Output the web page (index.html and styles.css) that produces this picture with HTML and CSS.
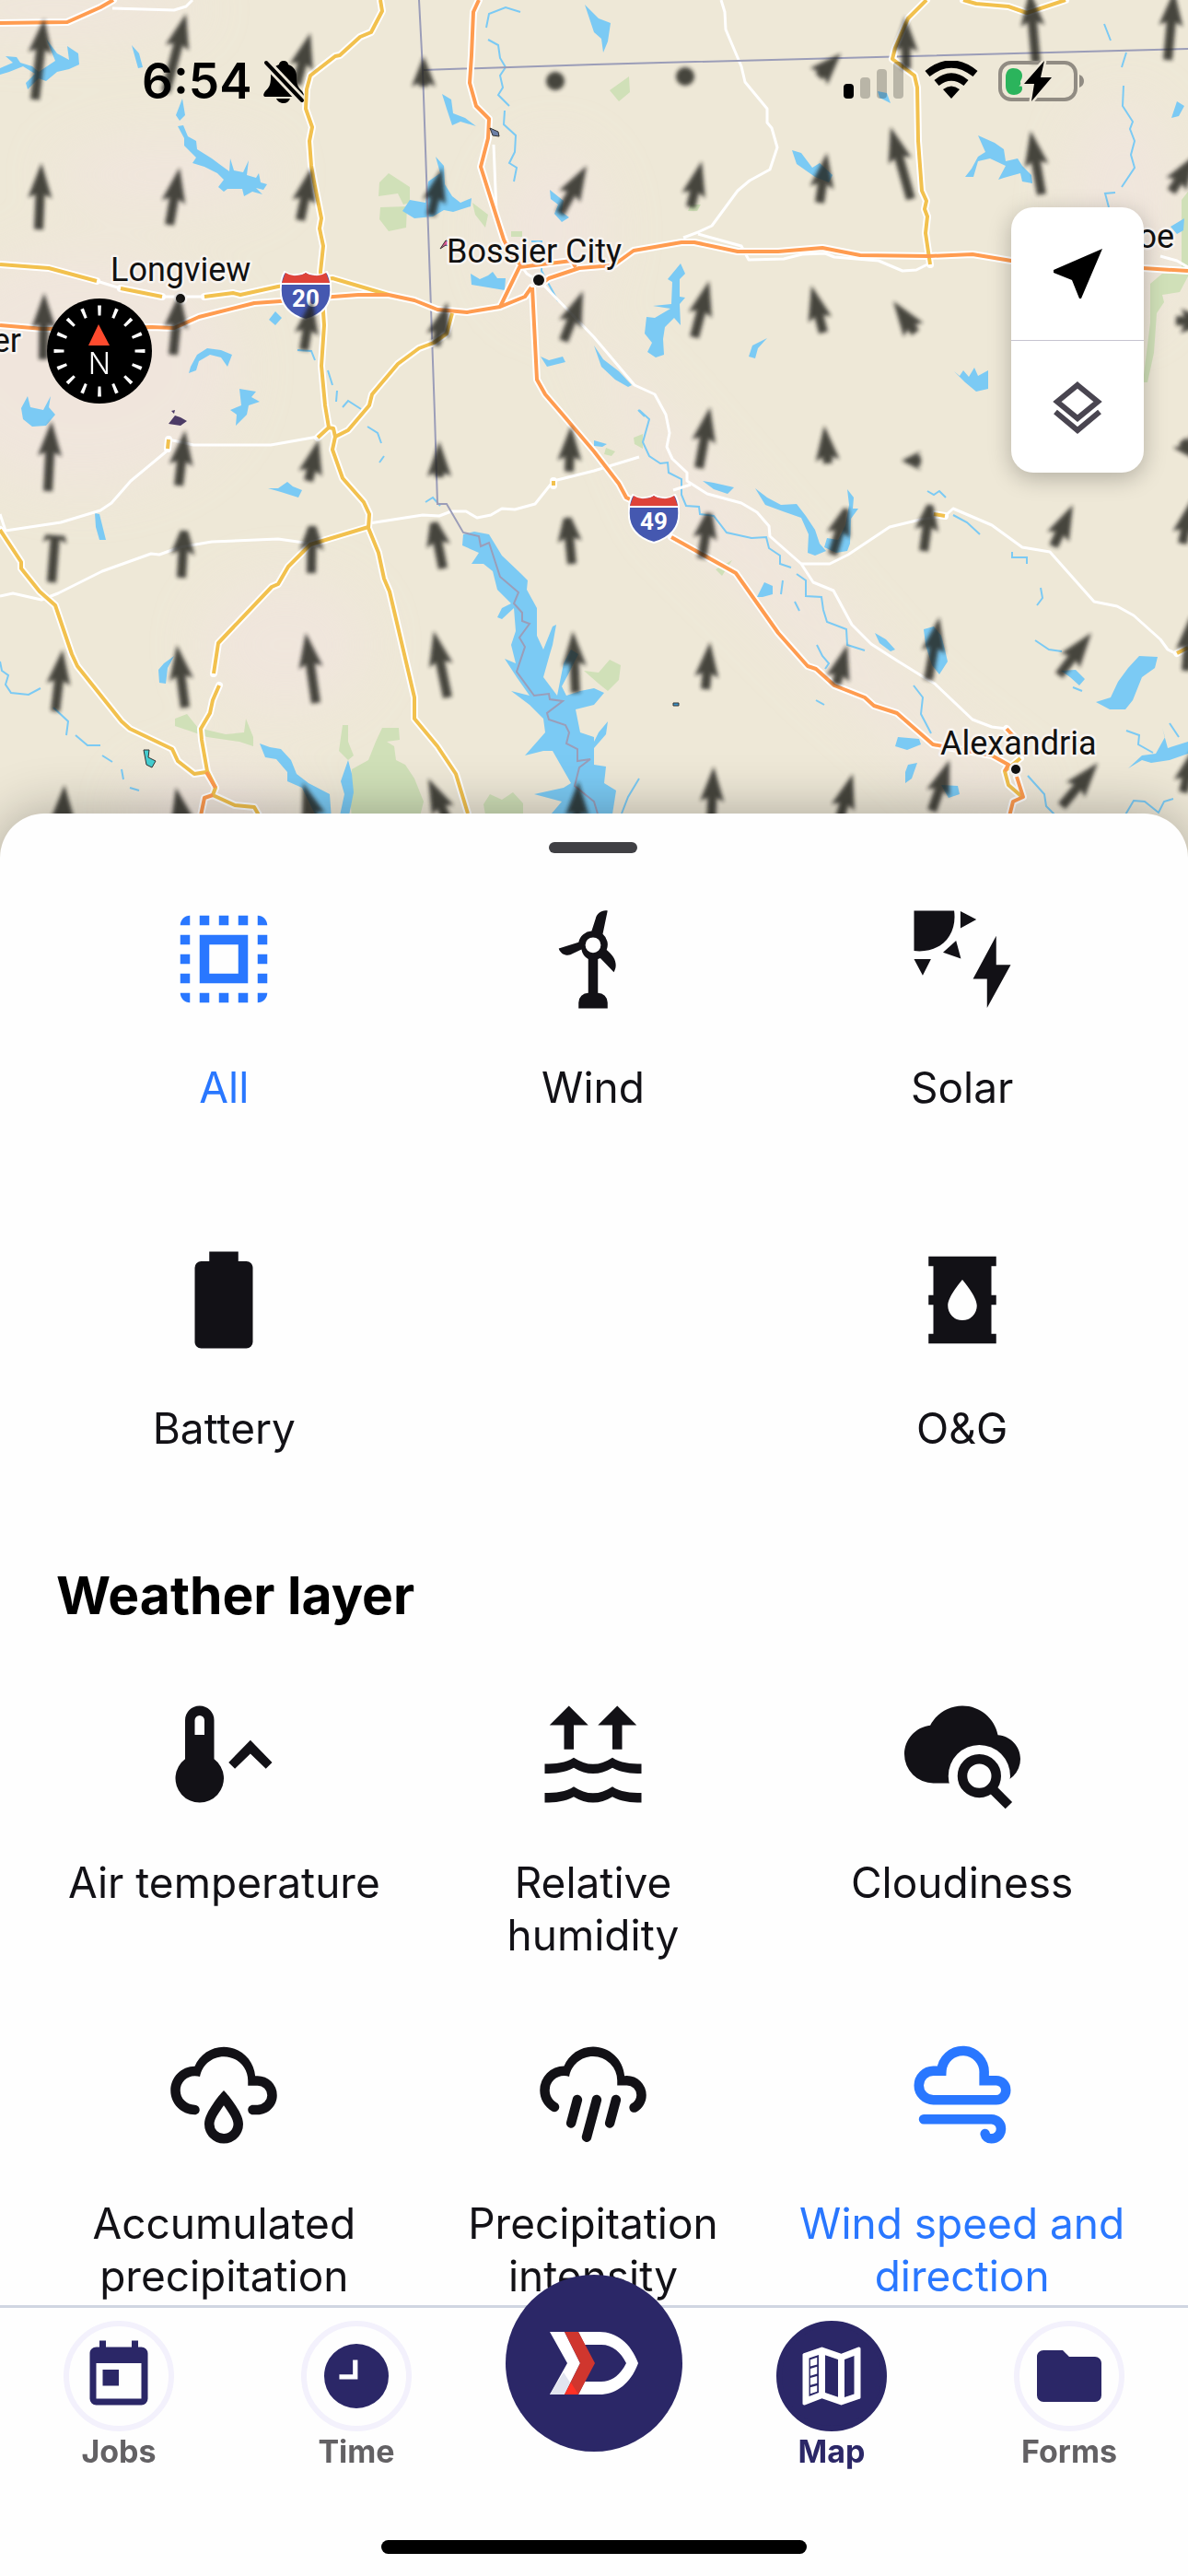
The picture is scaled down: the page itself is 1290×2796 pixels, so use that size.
FILE: index.html
```html
<!DOCTYPE html>
<html lang="en">
<head>
  <meta charset="UTF-8">
  <meta name="viewport" content="width=device-width, initial-scale=1.0">
  <title>Map layers</title>
  <link rel="stylesheet" href="styles.css">
</head>
<body>
  <div class="app">

    <!-- Map -->
    <section class="map" aria-label="Map">
      <svg class="map-canvas" viewBox="0 0 1290 932" preserveAspectRatio="xMidYMin slice">
        <defs>
          <filter id="soft" x="-10%" y="-10%" width="120%" height="120%"><feGaussianBlur stdDeviation="28"/></filter>
          <filter id="arrow-soft"><feGaussianBlur stdDeviation="2"/></filter>
          <g id="highways">
            <path d="M0 25 73 24 109 8 123 0"/>
            <path d="M0 353 47 357 165 355 189 356 216 344 276 329 304 327 362 322 389 320 422 320 450 326 475 336 507 339 543 333 570 322 577 312"/>
            <path d="M588 308 596 302 629 291 666 288 688 272 740 263 754 263 801 273 845 273 893 269 934 277 1009 278 1056 276 1098 283 1241 291 1290 294"/>
            <path d="M543 333 564 290 621 283 625 290"/>
            <path d="M520 0 514 13 512 60 510 90 517 115 531 129 530 150 522 181 547 260 555 277 566 288"/>
            <path d="M578 312 583 412 592 428 611 450 645 490 672 525 680 540 690 545M729 583 799 622 845 687 877 723 886 726 906 744 939 757 949 766 974 774 1013 808 1077 820 1095 830 1091 837"/>
            <path d="M1104 843 1111 865 1100 870 1095 890M1093 791 1106 805"/>
            <path d="M224 838 234 855M231 863 222 866 217 890"/>
          </g>
          <g id="main-roads">
            <path d="M413 0 415 12 403 35 391 40 369 60 364 61 337 82 333 97 332 118 339 138 336 153 338 180 341 197 349 237 347 248 351 267 348 295 352 353 349 397 353 440 357 464 362 465 364 474 361 488 372 519 395 545 401 558 400 573 411 600 417 628 423 642 450 757 450 780 475 810 495 840 508 883"/>
            <path d="M0 287 53 291 105 305M131 313 176 322M222 322 253 318 261 320 302 311 361 302 422 320"/>
            <path d="M491 340 485 362 471 372 455 378 432 395 404 428 401 440 378 467 364 474M357 464 345 475"/>
            <path d="M0 575 23 610 23 617 43 642 60 657 78 710 84 723 132 783 141 791 187 813 193 826 211 840 224 838"/>
            <path d="M400 572 337 591 313 615 302 634 295 637 237 698 232 731M238 744 231 760 228 774 218 791 219 803 225 837 234 855 231 863 255 874 276 876 284 890"/>
            <path d="M1006 0 986 20 972 52 969 64 993 82 996 95 997 153 1001 207 1006 218 1004 227 1007 235 1005 253 1010 287"/>
            <path d="M1046 0 1060 4 1095 7 1115 14 1157 0"/>
            <path d="M1108 823 1091 837 1095 852 1110 865M183 477 182 487M601 522V527M1014 558 1026 560M1278 709 1290 703"/>
          </g>
          <symbol id="shield" viewBox="0 0 56 54">
            <path d="M5 1Q12 6 18 4Q24 4 28 1Q32 4 38 4Q44 6 51 1Q55 8 55 16Q58 44 28 53Q-2 44 1 16Q1 8 5 1z" fill="#4558b0" stroke="#fff" stroke-width="2"/>
            <path d="M6 2Q12 6 18 5Q24 5 28 2Q32 5 38 5Q44 6 50 2L54 13H2z" fill="#df4339"/>
            <path d="M1 14H55" stroke="#fff" stroke-width="2"/>
          </symbol>
        </defs>

        <rect class="land" width="1290" height="932"/>
        <g class="urban" filter="url(#soft)">
          <ellipse cx="90" cy="400" rx="170" ry="130"/>
          <ellipse cx="60" cy="10" rx="160" ry="30"/>
          <ellipse cx="180" cy="190" rx="120" ry="40"/>
          <ellipse cx="600" cy="250" rx="60" ry="90"/>
          <ellipse cx="310" cy="700" rx="90" ry="70"/>
          <path d="M620 330 720 440 860 600 1000 760 1130 860 1060 883 900 740 720 560z"/>
          <ellipse cx="1220" cy="230" rx="60" ry="120"/>
          <ellipse cx="230" cy="880" rx="90" ry="50"/>
        </g>

        <g class="park">
          <path d="M422 188 445 203 445 220 438 222 432 210 411 213 412 198zM413 225 442 224 441 247 422 251 412 238zM513 220 530 233 527 247 516 233zM555 251H567V257H555z"/>
          <path d="M683 83 684 100 672 110 662 98zM750 222H761L757 229H747z"/>
          <path d="M1290 208 1283 217V297H1262L1249 308V350L1241 415H1246L1253 383 1256 340 1264 328 1262 320 1281 317 1290 300z"/>
          <path d="M190 780 203 775 215 790 245 797 265 795 267 780 275 800V810L260 805 225 800 205 793 190 788z"/>
          <path d="M372 787H378V805L384 820 378 825 368 815zM415 790H433L434 803 420 805 428 810 430 825 440 830 450 845 460 870 455 890H382L380 860 382 835 400 825 408 805z"/>
          <path d="M525 873 532 862 545 868 557 860 568 872V890H528z"/>
          <path d="M634 728 650 730 662 716 674 722 672 738 660 750 650 742zM688 475 698 471V487L689 482zM658 486 668 490 664 495 656 493zM777 618 795 608 784 625z"/>
        </g>

        <!-- Lakes -->
        <g class="water">
          <path d="M50 42 62 58 75 65 73 50 85 58 86 70 75 75 62 78 50 88 42 85 30 97 28 90 38 80 25 72 10 78 0 81V74L14 68 6 61 18 62 22 68 35 72 42 78 60 66z"/>
          <path d="M143 49 151 58 155 73 150 74zM198 107 201 125 195 131 191 125z"/>
          <path d="M193 137 199 136 204 148 213 153 214 162 222 167 230 172 238 178 249 186 250 172 254 185 264 187 270 174 268 190 278 193 281 188 283 198 290 200 286 206 278 204 285 211 274 208 265 213 263 205 247 205 243 208 237 203 243 195 236 188 222 181 209 177 213 171 200 158V150z"/>
          <path d="M480 102 490 108 492 123 505 128 517 137 500 132 491 136 485 118z"/>
          <path d="M473 170 482 180 483 200 491 213 500 220 512 215 511 224 492 230 482 228 470 235 450 237 437 229 445 217 462 220 465 197 478 188z"/>
          <path d="M597 206 612 218 610 230 618 236 610 241 602 232 606 222 598 216z"/>
          <path d="M511 297 521 303 530 299 535 295 540 302 549 302 548 315 530 312 512 309z"/>
          <path d="M587 387 596 391 611 387 614 393 594 398z"/>
          <path d="M207 398 214 385 225 378 240 380 252 385 247 398 240 388 228 385 216 392 213 402 205 405zM299 338 306 345 299 353 292 347z"/>
          <path d="M260 422 278 425 273 431 282 436 270 440 268 450 256 462 257 450 250 445 262 440z"/>
          <path d="M23 443 30 430 33 442 47 445 55 430 53 442 60 450 50 462 35 463 25 455z"/>
          <path d="M635 5 650 20 663 25 660 45 655 57 653 42 645 35z"/>
          <path d="M1062 147 1080 155 1090 162 1092 175 1105 172 1110 180 1120 190 1121 199 1110 197 1108 188 1090 193 1084 195 1092 180 1075 172 1062 175 1057 192 1048 192 1055 183 1062 170 1070 165z"/>
          <path d="M860 163 870 166 882 182 890 177 904 190 900 198 885 192 875 185 865 178zM953 99 963 101 967 112 955 106z"/>
          <path d="M739 286 744 297 738 303V322L744 323 738 330 739 353 732 345 722 355 720 368 721 385 712 388 703 382 708 372 700 362 702 344 711 345 728 335 709 332 729 330 730 306 725 303z"/>
          <path d="M833 367 823 378 820 389 813 387 817 375zM1036 403 1042 408 1046 402 1052 409 1058 399 1062 408 1073 402V422L1060 425 1048 415z"/>
          <path d="M645 375 655 390 672 403 686 418 682 420 668 412 653 398zM1278 110 1286 115 1280 126 1272 128zM1271 246 1286 237 1285 250 1278 254z"/>
          <path d="M291 530 302 530 312 523 318 528 328 532 324 540 305 534zM103 557 108 558 115 586H108L104 572zM189 712 182 725 180 742 173 741 172 727 178 720z"/>
          <path d="M282 807 293 811 305 813 316 825 322 840 335 850 358 862 360 890H345L328 855 312 848V838L300 824 288 822zM378 825 382 840 384 860 378 890H368L374 862 370 848z"/>
          <!-- Toledo Bend reservoir -->
          <path d="M503 580 515 577 531 580 545 603 565 622 573 630 572 640 583 660V690L590 705 600 680 604 678 600 700 597 710 590 735 605 755 612 720 620 705 628 710 618 730 610 745 615 755 630 750 645 747 656 752 645 765 625 770 630 795 645 800 645 830 658 832 656 850 669 858 664 890H593L610 870 580 862 612 855 620 850 600 815 590 815 570 820 592 795 590 780 575 765 555 750 575 755 561 735 548 715 560 720 555 700 560 685 558 660 545 672 540 670 545 660 555 655 540 640 535 620 525 612 512 612 520 600 502 592z"/>
          <path d="M645 478 659 482 654 485 645 484zM645 805 650 795 660 783 658 797 645 812z"/>
          <path d="M763 522 775 524 797 529 790 536 775 531zM820 530 833 540 848 548 865 547 875 560 885 575 890 590 897 598 885 603 877 600 878 580 870 562 850 555 831 548z"/>
          <path d="M920 531 927 540 926 552 932 552 924 563 923 590 920 598 908 600 895 594 898 584 910 586 918 570 922 548z"/>
          <path d="M822 648 830 632 839 636V645L828 648zM1014 680 1022 690 1026 705 1029 718 1020 732 1012 722 1005 700 1003 683zM950 687 962 694 972 705 967 707 955 698z"/>
          <path d="M1237 712 1257 713 1254 725 1240 735 1230 760 1222 770 1205 770 1190 762 1206 757 1214 740 1225 725zM1168 727 1178 737 1172 744 1162 735 1152 728z"/>
          <path d="M975 800 998 802 1000 808 985 814 972 810zM986 830 996 828 990 845 983 850V838zM1022 852 1040 853 1042 862 1030 866z"/>
          <path d="M1225 834 1240 820 1255 818 1265 800 1262 790 1268 812 1290 805V818L1270 825 1250 828 1240 825z"/>
        </g>

        <!-- Rivers -->
        <g class="river">
          <path d="M565 13 549 8 531 15 528 30M530 43 541 49 543 63 549 73 543 82 546 95 541 103 553 115M548 120 547 135 560 147 559 165 553 177 561 182 558 197"/>
          <path d="M577 262H588V294L606 327"/>
          <path d="M694 445 705 455 698 480 705 495 717 503 725 502 726 513 740 520V537L745 549 759 550 760 558 775 560 789 578 816 584 832 583 835 595 847 603V612L859 616"/>
          <path d="M865 623 875 630V647L892 648 894 662 898 675 919 683 920 700 939 706M992 744 1002 757 1000 775 1011 796"/>
          <path d="M886 760 895 765M863 653 868 663M850 630 848 645M887 700 893 712 900 720 896 726"/>
          <path d="M1220 93 1219 115 1230 132 1227 140 1232 153 1228 168 1232 182 1218 203M1211 209 1200 210 1204 225M1223 57 1218 73M1199 26 1206 44"/>
          <path d="M0 718 2 728 9 733 6 743 12 752 31 754 44 747M58 768 74 783 72 798M82 798 95 809 109 809M111 820 122 827M132 835 134 846M141 855 151 858"/>
          <path d="M356 402 361 418M366 424 365 436M323 380 338 381 342 391M399 463 410 470 414 481M417 495 412 502M462 545 470 540 478 549M372 442 378 435 392 444"/>
          <path d="M1116 842 1134 862 1136 875 1147 886M1221 886 1231 869 1243 870 1258 882 1264 870 1274 867M1035 559 1050 567 1064 580M1099 599V605H1115V612M1130 638 1132 649 1126 657"/>
          <path d="M1124 695 1139 705 1153 707M1165 746 1175 750M1223 793 1237 798 1236 808 1252 817M1270 785 1280 800M694 845 682 865 675 883M693 445 700 452M1007 533 1014 537 1020 533 1027 540"/>
        </g>

        <g class="small-roads">
          <path d="M122 9 189 11 202 7 209 0M783 0 787 13 788 32 805 72 809 89 833 118V133L838 139 844 160 836 184 814 196 801 207 773 245 758 252 742 258"/>
          <path d="M758 254 805 267 813 282 851 281 871 276 896 275 906 279 954 283 980 294 995 293 1009 286M105 305 131 313M176 322H222"/>
          <path d="M536 157 539 230 555 273 572 297 588 307 645 366 689 418 711 428 723 450 727 470 724 485 730 498 746 513V522L768 536 805 546 822 556 835 571 836 582 870 612 883 632 905 641 925 678 946 699 974 717 1003 735 1015 742 1056 781 1077 789 1093 791"/>
          <path d="M870 612H901L921 602 966 572 999 564 1026 560 1035 552 1077 570 1110 594 1140 599 1188 653 1213 658 1231 668 1260 694 1268 705 1278 710"/>
          <path d="M183 477 210 483 294 483 345 474M183 488 142 522 121 546 109 554 66 567 6 576 0 558M731 532 750 526"/>
          <path d="M0 647 14 644 45 651 63 644 111 620 164 601 173 602 195 594 230 588 302 585 337 590"/>
          <path d="M401 568 459 559 477 560 490 555H506L518 562 533 559 545 552 559 553 581 547 601 522 645 511 694 496M1260 278 1278 283 1290 290"/>
        </g>

        <g class="border">
          <path d="M455 0 459 76 472 450 475 547H485L503 578 520 582 522 593 531 589 543 626 563 643 558 655 567 665V674L575 677 564 692 570 702 561 729 580 755 596 753 597 759 611 761 594 774 596 781 614 787 618 795 615 807 627 813V826L641 824 629 833 624 853 645 870 651 890"/>
          <path d="M459 76 645 70 1290 53"/>
        </g>

        <use href="#highways" class="casing"/>
        <use href="#main-roads" class="casing"/>
        <use href="#main-roads" class="yellow"/>
        <use href="#highways" class="orange"/>

        <!-- Wind farm outlines -->
        <path d="M478 270 484 261 491 263 494 259 492 269 484 266z" fill="#d9578f" stroke="#333" stroke-width="1"/>
        <path d="M183 460 190 451 196 453 203 457 196 462zM186 446 190 445 189 449z" fill="#4c3b66"/>
        <path d="M156 814 162 814 161 822 169 826 165 833 159 830z" fill="#45cdd0" stroke="#333" stroke-width="1"/>
        <path d="M532 139 541 143 542 148 535 147z" fill="#6c7fa6" stroke="#333" stroke-width="1"/>
        <path d="M731 763H737V766H731z" fill="#3c94c9" stroke="#333" stroke-width="1"/>

        <g class="place">
          <circle cx="196" cy="324" r="5"/>
          <circle cx="585" cy="304" r="6"/>
          <circle cx="1103" cy="835" r="5"/>
          <text x="120" y="305">Longview</text>
          <text x="485" y="285">Bossier City</text>
          <text x="1021" y="819">Alexandria</text>
          <text x="23" y="382" text-anchor="end">Tyler</text>
          <text x="1275" y="269" text-anchor="end">Monroe</text>
        </g>

        <use href="#shield" x="304" y="294" width="56" height="54"/>
        <use href="#shield" x="682" y="536" width="56" height="54"/>
        <g class="route">
          <text x="332" y="333">20</text>
          <text x="710" y="575">49</text>
        </g>

        <g id="wind" class="wind" filter="url(#arrow-soft)">
          <circle cx="603" cy="88" r="10"/>
          <circle cx="744" cy="83" r="10"/>
        </g>
      </svg>

      <header class="status-bar">
        <div class="status-left">
          <time>6:54</time>
          <svg width="46" height="48" viewBox="0 0 46 48" aria-hidden="true">
            <path d="M23 2c-3 0-5 2-5 4-6 2-9 7-9 13 0 10-2 12-6 16-3 4-2 6 1 6h38c3 0 4-2 1-6-4-4-6-6-6-16 0-6-3-11-9-13 0-2-2-4-5-4zM15 43h15c-1 3-4 5-7 5s-7-2-8-5z"/>
            <path d="M3 3 43 45" stroke="#ede7d8" stroke-width="10"/>
            <path d="M4 4 43 45" stroke="#000" stroke-width="4" stroke-linecap="round"/>
          </svg>
        </div>
        <div class="status-right">
          <svg width="66" height="44" viewBox="0 0 66 44" aria-hidden="true">
            <rect y="25" width="11" height="16" rx="4"/>
            <g opacity=".22"><rect x="18" y="18" width="11" height="23" rx="4"/><rect x="36" y="9" width="11" height="32" rx="4"/><rect x="54" y="1" width="11" height="40" rx="4"/></g>
          </svg>
          <svg width="58" height="44" viewBox="0 0 58 44" aria-hidden="true">
            <g fill="none" stroke="#000" stroke-width="8"><path d="M3 14Q29-7 55 14"/><path d="M13 24Q29 11 45 24"/></g>
            <path d="M20 31q9-7 18 0l-9 10z"/>
          </svg>
          <svg width="94" height="44" viewBox="0 0 94 44" aria-hidden="true">
            <rect x="2" y="2" width="82" height="40" rx="12" fill="none" stroke="#918c83" stroke-width="4"/>
            <path d="M88 15q5 2 5 7t-5 7z" fill="#918c83"/>
            <path d="M16 8c6 0 10 3 10 8 0 4-2 5-2 7 0 3 2 4 2 7 0 4-4 7-9 7-6 0-9-4-9-10V18c0-6 3-10 8-10z" fill="#2bb45c"/>
            <path d="M50 0 28 25H39L36 44 58 18H46z" stroke="#ede7d8" stroke-width="5" paint-order="stroke"/>
          </svg>
        </div>
      </header>

      <button class="compass" type="button" aria-label="Point north">
        <svg viewBox="0 0 114 114">
          <circle cx="57" cy="57" r="57"/>
          <circle class="ticks" cx="57" cy="57" r="44" pathLength="160"/>
          <path d="M56 28 68 51H45z" fill="#ff4b2e"/>
          <text x="57" y="82">N</text>
        </svg>
      </button>

      <div class="map-controls">
        <button type="button" aria-label="My location">
          <svg width="54" height="54" viewBox="0 0 54 54"><path d="M54 0 1 23v3l20 8 8 20h2z"/></svg>
        </button>
        <button type="button" aria-label="Layers">
          <svg width="54" height="58" viewBox="0 0 54 58"><g fill="none" stroke="#494550" stroke-width="6"><path d="M27 5 49 23 27 41 5 23z"/><path d="M3 34 27 54 51 34"/></g></svg>
        </button>
      </div>
    </section>

    <!-- Layers sheet -->
    <main class="sheet">
      <div class="handle"></div>

      <div class="layer-grid">
        <button class="layer active" type="button" aria-pressed="true">
          <svg viewBox="0 0 24 24"><path d="M3 5h2V3c-1.100 0-2 .9-2 2zm0 8h2v-2H3v2zm4 8h2v-2H7v2zM3 9h2V7H3v2zm10-6h-2v2h2V3zm6 0v2h2c0-1.100-.9-2-2-2zM5 21v-2H3c0 1.100.9 2 2 2zm-2-4h2v-2H3v2zM9 3H7v2h2V3zm2 18h2v-2h-2v2zm8-8h2v-2h-2v2zm0 8c1.100 0 2-.9 2-2h-2v2zm0-12h2V7h-2v2zm0 8h2v-2h-2v2zm-4 4h2v-2h-2v2zm0-16h2V3h-2v2zM7 17h10V7H7v10zm2-8h6v6H9V9z"/></svg>
          <span>All</span>
        </button>
        <button class="layer" type="button">
          <svg viewBox="0 0 24 24"><path d="M15 2 14 6.800a2.900 2.900 0 0 1 .8 3.300c1.200 1 1.900 2 1.900 3.200 0 .6-.2 1-.4 1.400L13.500 11.800 13 12V19a2 2 0 0 1 2 2v1.200H9V21a2 2 0 0 1 2-2V12a2.900 2.900 0 0 1-1.400-2L7.300 11.100c-.9.3-2.100-.2-2.400-1.300L9 8.500a2.900 2.900 0 0 1 2.700-2.300L12.500 3.700C12.800 2.500 13.800 1.800 15 2zM12 7.500a1.600 1.600 0 1 0 0 3.200 1.600 1.600 0 0 0 0-3.200z"/></svg>
          <span>Wind</span>
        </button>
        <button class="layer" type="button">
          <svg viewBox="0 0 24 24"><path d="M2 2h8.300C11 7.300 7.300 10.900 2 10.300zM11.600 2.100 14.900 3.800 11.600 5.600zM10.700 8.200 8 10.600 11.700 11.900zM2 12H5.500L3.800 15.400zM19 7.200V13.200H22L17.100 22.100V16.100H14.200z"/></svg>
          <span>Solar</span>
        </button>
        <button class="layer" type="button">
          <svg viewBox="0 0 24 24"><path d="M16.670 4H15V2H9V4H7.330A1.330 1.330 0 0 0 6 5.330V20.670C6 21.400 6.600 22 7.330 22H16.670A1.330 1.330 0 0 0 18 20.670V5.330C18 4.600 17.400 4 16.670 4Z"/></svg>
          <span>Battery</span>
        </button>
        <button class="layer last-col" type="button">
          <svg viewBox="0 0 24 24"><path d="M5 3H19V5H18V11H19V13H18V19H19V21H5V19H6V13H5V11H6V5H5zM12 7.800S9 11.200 9 13.200a3 3 0 0 0 6 0C15 11.200 12 7.800 12 7.800z"/></svg>
          <span>O&amp;G</span>
        </button>
      </div>

      <h2>Weather layer</h2>

      <div class="layer-grid">
        <button class="layer" type="button">
          <svg viewBox="0 0 24 24"><path d="M4 13V5a3 3 0 0 1 6 0v8a5 5 0 1 1-6 0zM7 4a1 1 0 0 0-1 1v3h2V5a1 1 0 0 0-1-1zM17.500 9.100 22 13.700 20.700 15 17.500 11.900 14.300 15 13 13.700z"/></svg>
          <span>Air temperature</span>
        </button>
        <button class="layer" type="button">
          <svg viewBox="0 0 24 24"><path d="M7 2 3 6H6V11H8V6H11zM17 2 13 6H16V11H18V6H21z"/><path id="wave" d="M2 14c2.200 0 4.400-.2 6-1.300 2.600 1.800 5.400 1.800 8 0 1.600 1.100 3.800 1.300 6 1.300v2c-2.200 0-4.200-.2-6-1.200-2.600 1.600-5.400 1.600-8 0C6.200 15.800 4.200 16 2 16z"/><use href="#wave" y="6"/></svg>
          <span>Relative humidity</span>
        </button>
        <button class="layer" type="button">
          <svg viewBox="0 0 24 24"><path d="M19.350 8.030C18.670 4.590 15.640 2 12 2 9.110 2 6.600 3.640 5.350 6.030 2.340 6.360 0 8.900 0 12a6 6 0 0 0 6 6H19a5 5 0 0 0 5-5C24 10.360 21.950 8.220 19.350 8.030Z"/><circle cx="15.500" cy="16.500" r="6.400" fill="#fefefe"/><circle cx="15.500" cy="16.500" r="3.500" fill="none" stroke="currentColor" stroke-width="2"/><path d="M18 19 21.600 22.600" stroke="currentColor" stroke-width="2"/></svg>
          <span>Cloudiness</span>
        </button>
        <button class="layer" type="button">
          <svg viewBox="0 0 24 24"><path d="M6 14.030A1 1 0 0 1 7 15.030C7 15.580 6.550 16.030 6 16.030 3.240 16.030 1 13.790 1 11.030 1 8.270 3.240 6.030 6 6.030 7 3.680 9.300 2.030 12 2.030 15.430 2.030 18.240 4.690 18.500 8.060L19 8.030A4 4 0 0 1 23 12.030C23 14.230 21.210 16.030 19 16.030H18C17.450 16.030 17 15.580 17 15.030 17 14.470 17.450 14.030 18 14.030H19A2 2 0 0 0 21 12.030 2 2 0 0 0 19 10.030H17V9.030C17 6.270 14.760 4.030 12 4.030 9.500 4.030 7.450 5.840 7.060 8.210 6.730 8.090 6.370 8.030 6 8.030A3 3 0 0 0 3 11.030 3 3 0 0 0 6 14.030M12 14.150C12.180 14.390 12.370 14.660 12.560 14.940 13 15.560 14 17.030 14 18 14 19.110 13.100 20 12 20A2 2 0 0 1 10 18C10 17.030 11 15.560 11.440 14.940 11.630 14.660 11.820 14.400 12 14.150M12 11.030 11.500 11.590S10.650 12.550 9.790 13.810C8.930 15.060 8 16.560 8 18A4 4 0 0 0 12 22 4 4 0 0 0 16 18C16 16.560 15.070 15.060 14.210 13.810 13.350 12.550 12.500 11.590 12.500 11.590"/></svg>
          <span>Accumulated precipitation</span>
        </button>
        <button class="layer" type="button">
          <svg viewBox="0 0 24 24"><path d="M9 12C9.530 12.140 9.850 12.690 9.710 13.220L8.410 18.050C8.270 18.590 7.720 18.900 7.190 18.760 6.650 18.620 6.340 18.070 6.500 17.540L7.780 12.710C7.920 12.170 8.470 11.860 9 12M13 12C13.530 12.140 13.850 12.690 13.710 13.220L11.640 20.950C11.500 21.500 10.950 21.800 10.410 21.660 9.880 21.500 9.560 20.970 9.700 20.430L11.780 12.710C11.920 12.170 12.470 11.860 13 12M17 12C17.530 12.140 17.850 12.690 17.710 13.220L16.410 18.050C16.270 18.590 15.720 18.900 15.190 18.760 14.650 18.620 14.340 18.070 14.500 17.540L15.780 12.710C15.920 12.170 16.470 11.860 17 12M17 10V9A5 5 0 0 0 12 4C9.500 4 7.450 5.820 7.060 8.190 6.730 8.070 6.370 8 6 8A3 3 0 0 0 3 11C3 12.110 3.600 13.080 4.500 13.600 5 13.870 5.140 14.500 4.870 14.960 4.590 15.430 4 15.600 3.500 15.320 2 14.470 1 12.850 1 11A5 5 0 0 1 6 6C7 3.650 9.300 2 12 2 15.430 2 18.240 4.660 18.500 8.030L19 8A4 4 0 0 1 23 12C23 13.500 22.200 14.770 21 15.460 20.500 15.730 19.910 15.570 19.630 15.090 19.360 14.610 19.500 14 20 13.720 20.600 13.390 21 12.740 21 12A2 2 0 0 0 19 10H17Z"/></svg>
          <span>Precipitation intensity</span>
        </button>
        <button class="layer active" type="button" aria-pressed="true">
          <svg viewBox="0 0 24 24"><g fill="none" stroke="currentColor" stroke-width="2" stroke-linecap="round"><path d="M6 13a3 3 0 0 1 0-6H7.700A4.400 4.400 0 0 1 16.500 7.500V9H19a2 2 0 0 1 0 4z"/><path d="M4 17H18a2 2 0 0 1 0 4c-.7 0-1.200-.4-1.300-1"/></g></svg>
          <span>Wind speed and direction</span>
        </button>
      </div>
    </main>

    <!-- Bottom navigation -->
    <nav class="tab-bar">
      <div class="tabs">
        <a class="tab" href="#jobs">
          <i><svg viewBox="0 0 24 24"><path d="M7 10H12V15H7M19 19H5V8H19M19 3H18V1H16V3H8V1H6V3H5C3.890 3 3 3.900 3 5V19A2 2 0 0 0 5 21H19A2 2 0 0 0 21 19V5A2 2 0 0 0 19 3Z"/></svg></i>
          <span>Jobs</span>
        </a>
        <a class="tab" href="#time">
          <i><svg viewBox="0 0 24 24"><path d="M12 2a10 10 0 1 0 0 20 10 10 0 0 0 0-20zM12.400 13H6.700V11.500H10.900V7H12.400z"/></svg></i>
          <span>Time</span>
        </a>
        <a class="tab home" href="#home" aria-label="Home">
          <svg width="96" height="68" viewBox="0 0 96 68">
            <path d="M31 0H54C72 0 88 12 96 34 88 56 72 68 54 68H31L38 54H56C68 54 77 46 83 34 77 22 68 14 56 14H38z" fill="#fff"/>
            <path d="M0 0H16L33 34 16 68H0L19 34z" fill="#fff"/>
            <path d="M0 68 15 44 22 55 16 68z" fill="#e1e4ef"/>
            <path d="M16 0H31L49 34 31 68H16L33 34z" fill="#d0362e"/>
            <path d="M16 68 23 55 31 68z" fill="#ff3126"/>
          </svg>
        </a>
        <a class="tab current" href="#map" aria-current="page">
          <i><svg viewBox="0 0 24 24"><path d="M20.500 3 20.340 3.030 15 5.100 9 3 3.360 4.900C3.150 4.970 3 5.150 3 5.380V20.500C3 20.780 3.220 21 3.500 21L3.660 20.970 9 18.900 15 21 20.640 19.100C20.850 19.030 21 18.850 21 18.620V3.500C21 3.220 20.780 3 20.500 3zM10 5.470 14 6.870V18.530L10 17.130zM5 6.460 8 5.450V17.150L5 18.310zM19 17.540 16 18.550V6.860L19 5.700z"/><path d="M5.400 6.900 7.500 6.200V8.400L5.400 9zM5.400 9.700 7.500 9.100V11.300L5.400 11.900zM5.400 12.600 7.500 12V14.200L5.400 14.800zM5.400 15.500 7.500 14.900V16.800L5.400 17.500z"/></svg></i>
          <span>Map</span>
        </a>
        <a class="tab" href="#forms">
          <i><svg viewBox="0 0 24 24"><path d="M10 4H4C2.890 4 2 4.890 2 6V18A2 2 0 0 0 4 20H20A2 2 0 0 0 22 18V8C22 6.890 21.100 6 20 6H12L10 4Z"/></svg></i>
          <span>Forms</span>
        </a>
      </div>
      <div class="home-indicator"></div>
    </nav>
  </div>

  <script>
    // Wind arrows: tip x, tip y, tail x, tail y, part of the tip cut off at a tile edge
    const arrows = [
      [48, 20, 38, 108], [202, 15, 180, 100], [337, 36, 322, 92], [460, 61, 460, 94],
      [913, 58, 889, 83], [983, 18, 984, 75], [1118, -10, 1125, 68], [1275, -10, 1268, 65],
      [45, 177, 42, 249], [195, 182, 184, 244], [338, 182, 326, 239], [480, 182, 468, 234],
      [637, 180, 608, 232], [762, 175, 750, 225], [898, 166, 890, 220], [967, 138, 989, 216],
      [1119, 142, 1131, 211], [1298, 168, 1272, 208],
      [48, 318, 47, 390], [195, 318, 188, 385], [339, 325, 330, 380], [486, 328, 473, 375],
      [633, 316, 612, 370], [770, 305, 754, 366], [881, 310, 894, 361], [970, 327, 994, 361],
      [1320, 350, 1277, 348],
      [56, 457, 52, 533], [201, 467, 194, 527], [346, 477, 335, 522], [477, 479, 477, 518],
      [620, 462, 618, 512], [771, 442, 759, 508], [895, 462, 899, 503], [979, 500, 1000, 500],
      [1300, 500, 1284, 478],
      [60, 581, 56, 632, 30], [200, 576, 197, 627, 12], [339, 571, 338, 622, 12], [471, 567, 481, 617, 12],
      [616, 562, 621, 612, 12], [770, 557, 762, 606, 10], [919, 552, 904, 602, 8], [1010, 548, 1003, 598, 10],
      [1165, 548, 1144, 593], [1294, 542, 1284, 590],
      [68, 705, 60, 772], [192, 700, 201, 768], [332, 687, 343, 763], [471, 685, 486, 757],
      [622, 685, 625, 752], [771, 697, 766, 748], [920, 700, 908, 743], [1020, 670, 1008, 738],
      [1185, 687, 1150, 733], [1293, 668, 1288, 728],
      [70, 852, 67, 910], [191, 855, 203, 915], [329, 850, 348, 910], [465, 845, 488, 895],
      [628, 848, 626, 910], [775, 832, 772, 895], [926, 840, 910, 895], [1031, 825, 1012, 880],
      [1192, 828, 1153, 875], [1296, 812, 1285, 860]
    ];

    const wind = document.getElementById('wind');
    arrows.forEach(([x1, y1, x2, y2, cut = 0]) => {
      const length = Math.hypot(x2 - x1, y2 - y1);
      const angle = Math.atan2(x1 - x2, y2 - y1) * 180 / Math.PI;
      const head = Math.min(38, length) - cut;
      const half = Math.min(13, length / 2);
      const top = half * cut / 38;
      const neck = Math.max(head - 4, 0);
      const arrow = document.createElementNS('http://www.w3.org/2000/svg', 'path');
      arrow.setAttribute('d', `M${-top} 0H${top}L${half} ${head}L5 ${neck}V${length}H-5V${neck}L${-half} ${head}z`);
      arrow.setAttribute('transform', `translate(${x1} ${y1}) rotate(${angle})`);
      wind.appendChild(arrow);
    });
  </script>
</body>
</html>
```

FILE: styles.css
```css
* {
  box-sizing: border-box;
}
body {
  margin: 0;
  background: #fefefe;
  color: #121116;
  font-family: Inter, "Liberation Sans", sans-serif;
}
button {
  padding: 0;
  border: 0;
  background: none;
  color: inherit;
  font: inherit;
  cursor: pointer;
}
a {
  color: inherit;
  text-decoration: none;
}
svg {
  display: block;
}
.app {
  display: flex;
  flex-direction: column;
  height: 100vh;
}

/* Map */
.map {
  position: relative;
  flex: none;
  height: 932px;
}
.map-canvas {
  width: 100%;
  height: 100%;
}
.land { fill: #eee8d7; }
.urban { fill: #f1e5df; opacity: 0.7; }
.park { fill: #d0e0b8; }
.water { fill: #7bcaf4; }
.river { fill: none; stroke: #7bcaf4; stroke-width: 2; }
.small-roads { fill: none; stroke: #fff; stroke-width: 3; stroke-linejoin: round; }
.border { fill: none; stroke: #9b9db8; stroke-width: 2; }
.casing { fill: none; stroke: #fff; stroke-width: 8; stroke-linejoin: round; stroke-linecap: round; }
.yellow { fill: none; stroke: #f2c14e; stroke-width: 4; stroke-linejoin: round; }
.orange { fill: none; stroke: #ff9c50; stroke-width: 4; stroke-linejoin: round; }
.wind { fill: #24211f; opacity: 0.82; }
.place {
  fill: #111;
  font-family: Roboto, sans-serif;
  font-size: 36px;
  stroke: #f8f4f0;
  stroke-width: 5px;
  stroke-linejoin: round;
  paint-order: stroke;
}
.route {
  fill: #fff;
  font-family: Roboto, sans-serif;
  font-size: 26px;
  font-weight: 700;
  text-anchor: middle;
}

.status-bar {
  position: absolute;
  top: 0;
  left: 0;
  right: 0;
  display: flex;
  justify-content: space-between;
  align-items: center;
  padding: 56px 112px 0 154px;
}
.status-left,
.status-right {
  display: flex;
  align-items: center;
}
.status-left { gap: 12px; }
.status-right { gap: 22px; }
.status-bar time {
  color: #000;
  font-size: 53px;
  font-weight: 600;
  line-height: 64px;
}

.compass {
  position: absolute;
  top: 324px;
  left: 51px;
  width: 114px;
  height: 114px;
}
.compass text {
  fill: #fff;
  font-size: 32px;
  font-weight: 300;
  text-anchor: middle;
}
.ticks {
  fill: none;
  stroke: #fff;
  stroke-width: 11;
  stroke-dasharray: 2 8;
  stroke-dashoffset: 1;
}

.map-controls {
  position: absolute;
  top: 225px;
  right: 48px;
  width: 144px;
  border-radius: 24px;
  background: #fff;
  box-shadow: 0 6px 24px rgba(0, 0, 0, 0.25);
}
.map-controls button {
  display: grid;
  place-items: center;
  width: 144px;
  height: 144px;
}
.map-controls button + button {
  border-top: 1px solid #c6c4d0;
}

/* Layers sheet */
.sheet {
  position: relative;
  flex: 1;
  min-height: 0;
  margin-top: -49px;
  padding: 31px 45px 0 43px;
  overflow: hidden;
  border-radius: 48px 48px 0 0;
  background: #fefefe;
  box-shadow: 0 0 60px rgba(0, 0, 0, 0.3);
}
.handle {
  width: 96px;
  height: 12px;
  margin: 0 auto 52px;
  border-radius: 6px;
  background: #404044;
}
.layer-grid {
  display: grid;
  grid-template-columns: repeat(3, 1fr);
  row-gap: 80px;
}
.layer {
  display: flex;
  flex-direction: column;
  align-items: center;
  gap: 48px;
  min-height: 290px;
  padding: 0 20px;
  font-size: 46px;
  line-height: 57px;
  text-align: center;
}
.layer svg {
  width: 126px;
  height: 126px;
  fill: currentColor;
}
.layer.active { color: #2977ff; }
.last-col { grid-column: 3; }
.sheet h2 {
  margin: 58px 0 73px 18px;
  color: #000;
  font-size: 57px;
  font-weight: 700;
  line-height: 72px;
}

/* Bottom navigation */
.tab-bar {
  position: relative;
  flex: none;
  padding: 14px 0 24px;
  border-top: 3px solid #d0d6e2;
  background: #fefefe;
}
.tabs {
  display: grid;
  grid-template-columns: repeat(5, 1fr);
  justify-items: center;
  height: 164px;
}
.tab {
  color: #636164;
  font-size: 34px;
  font-weight: 700;
  line-height: 44px;
  text-align: center;
}
.tab i {
  display: grid;
  place-items: center;
  width: 120px;
  height: 120px;
  border: 6px solid #f3f1fc;
  border-radius: 50%;
}
.tab i svg {
  width: 84px;
  height: 84px;
  fill: #2b2767;
}
.tab.current { color: #2b2767; }
.tab.current i {
  border-color: #2b2767;
  background: #2b2767;
}
.tab.current i svg { fill: #fff; }
.tab.home {
  display: grid;
  place-items: center;
  width: 192px;
  height: 192px;
  margin-top: -50px;
  border-radius: 50%;
  background: #2b2767;
}
.home-indicator {
  width: 462px;
  height: 15px;
  margin: 74px auto 0;
  border-radius: 8px;
  background: #000;
}
```
